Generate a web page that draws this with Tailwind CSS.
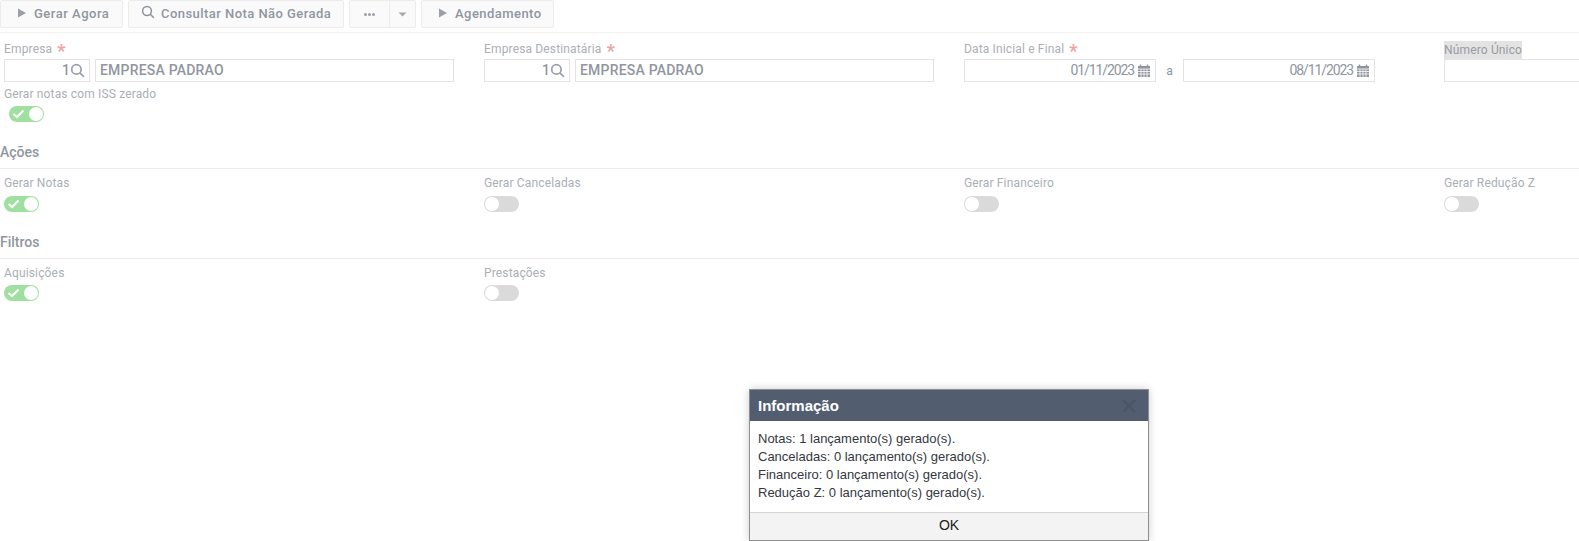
<!DOCTYPE html>
<html lang="pt-BR">
<head>
<meta charset="utf-8">
<script src="https://cdn.jsdelivr.net/npm/@tailwindcss/browser@4"></script>
</head>
<body class="bg-white">
<div class="relative w-[1579px] h-[541px] overflow-hidden bg-white font-['Roboto',sans-serif] text-[12px] tracking-[0.15px] text-[#aaafb6]">

  <!-- toolbar -->
  <div class="flex gap-[5px] h-[33px] border-b border-[#f2f2f2]">
    <button class="flex items-center w-[123px] h-[28px] pl-[15px] bg-[#fafafa] border border-[#ececec] rounded-[2px] text-[13px] font-medium text-[#8f96a0] tracking-[0.5px]">
      <svg class="w-[12px] h-[12px] mr-[6px] -mt-[3px]" viewBox="0 0 12 12"><path d="M2 1.5 L10 6 L2 10.5 Z" fill="#9aa0a9"/></svg>Gerar Agora
    </button>
    <button class="flex items-center w-[216px] h-[28px] pl-[12px] bg-[#fafafa] border border-[#ececec] rounded-[2px] text-[13px] font-medium text-[#8f96a0] tracking-[0.45px]">
      <svg class="w-[14px] h-[14px] mr-[6px] -mt-[4px]" viewBox="0 0 14 14" fill="none" stroke="#8c939d" stroke-width="1.5"><circle cx="6" cy="6" r="4.4"/><path d="M9 9 L12.8 12.8"/></svg>Consultar Nota Não Gerada
    </button>
    <div class="flex w-[67px] h-[28px] bg-[#fafafa] border border-[#ececec] rounded-[2px]">
      <div class="flex items-center justify-center w-[40px] border-r border-[#ececec] gap-[1px]">
        <span class="w-[3px] h-[3px] rounded-full bg-[#9aa0a9]"></span><span class="w-[3px] h-[3px] rounded-full bg-[#9aa0a9]"></span><span class="w-[3px] h-[3px] rounded-full bg-[#9aa0a9]"></span>
      </div>
      <div class="flex items-center justify-center flex-1">
        <svg class="w-[9px] h-[5px]" viewBox="0 0 9 5"><path d="M0.5 0.5 H8.5 L4.5 4.5 Z" fill="#a5aab1"/></svg>
      </div>
    </div>
    <button class="flex items-center w-[133px] h-[28px] pl-[15px] bg-[#fafafa] border border-[#ececec] rounded-[2px] text-[13px] font-medium text-[#8f96a0] tracking-[0.45px]">
      <svg class="w-[12px] h-[12px] mr-[6px] -mt-[3px]" viewBox="0 0 12 12"><path d="M2 1.5 L10 6 L2 10.5 Z" fill="#9aa0a9"/></svg>Agendamento
    </button>
  </div>

  <!-- main fields -->
  <div class="grid grid-cols-[480px_480px_480px_480px] pl-[4px] pt-[8px]">
    <div>
      <div class="h-[18px] leading-[16px]">Empresa <span class="ml-[2px] text-[#f0a3a3] text-[18px] font-bold leading-[16px] align-[-4px]">*</span></div>
      <div class="flex gap-[5px]">
        <div class="flex items-center justify-end w-[86px] h-[23px] pr-[4px] border border-[#e3e3e3] text-[14px] font-medium text-[#8f96a0]">1<svg class="w-[15px] h-[15px]" viewBox="0 0 14 14" fill="none" stroke="#9aa0a9" stroke-width="1.6"><circle cx="6" cy="6" r="4.4"/><path d="M9 9 L13 13"/></svg></div>
        <div class="flex items-center w-[359px] h-[23px] pl-[4px] border border-[#e3e3e3] text-[14px] font-medium tracking-[0.2px] text-[#8f96a0]">EMPRESA PADRAO</div>
      </div>
    </div>
    <div>
      <div class="h-[18px] leading-[16px]">Empresa Destinatária <span class="ml-[2px] text-[#f0a3a3] text-[18px] font-bold leading-[16px] align-[-4px]">*</span></div>
      <div class="flex gap-[5px]">
        <div class="flex items-center justify-end w-[86px] h-[23px] pr-[4px] border border-[#e3e3e3] text-[14px] font-medium text-[#8f96a0]">1<svg class="w-[15px] h-[15px]" viewBox="0 0 14 14" fill="none" stroke="#9aa0a9" stroke-width="1.6"><circle cx="6" cy="6" r="4.4"/><path d="M9 9 L13 13"/></svg></div>
        <div class="flex items-center w-[359px] h-[23px] pl-[4px] border border-[#e3e3e3] text-[14px] font-medium tracking-[0.2px] text-[#8f96a0]">EMPRESA PADRAO</div>
      </div>
    </div>
    <div>
      <div class="h-[18px] leading-[16px]">Data Inicial e Final <span class="ml-[2px] text-[#f0a3a3] text-[18px] font-bold leading-[16px] align-[-4px]">*</span></div>
      <div class="flex items-center">
        <div class="flex items-center justify-end w-[192px] h-[23px] pr-[4px] border border-[#e3e3e3] text-[14px] tracking-[-1.1px] text-[#8f96a0]">01/11/2023<svg class="w-[14px] h-[14px] ml-[3px]" viewBox="0 0 14 14"><path fill="#8f959e" d="M1 2h12v11H1z"/><path stroke="#8f959e" stroke-width="1.4" d="M3.5 .5v3M10.5 .5v3"/><path stroke="#fff" stroke-width=".8" d="M1 5h12M1 7.5h12M1 10h12M4 5v8M7 5v8M10 5v8"/></svg></div>
        <span class="w-[27px] text-center text-[#8f96a0]">a</span>
        <div class="flex items-center justify-end w-[192px] h-[23px] pr-[4px] border border-[#e3e3e3] text-[14px] tracking-[-1.1px] text-[#8f96a0]">08/11/2023<svg class="w-[14px] h-[14px] ml-[3px]" viewBox="0 0 14 14"><path fill="#8f959e" d="M1 2h12v11H1z"/><path stroke="#8f959e" stroke-width="1.4" d="M3.5 .5v3M10.5 .5v3"/><path stroke="#fff" stroke-width=".8" d="M1 5h12M1 7.5h12M1 10h12M4 5v8M7 5v8M10 5v8"/></svg></div>
      </div>
    </div>
    <div>
      <div class="h-[18px] leading-[18px]"><span class="inline-block h-[18px] bg-[#e3e3e3] text-[#979ca3]">Número Único</span></div>
      <div class="w-[200px] h-[23px] border border-[#e3e3e3]"></div>
    </div>
  </div>
  <div class="pl-[4px] mt-[4px] leading-[16px]">Gerar notas com ISS zerado</div>
  <div class="pl-[9px] mt-[4px]">
    <div class="flex items-center justify-between w-[35px] h-[16px] rounded-full bg-[#9fdf9f] pl-[3px] pr-[1px]">
      <svg class="w-[13px] h-[10px]" viewBox="0 0 13 10" fill="none" stroke="#fff" stroke-width="2.2"><path d="M1.5 5 L5 8 L11.5 1.5"/></svg>
      <span class="w-[14px] h-[14px] rounded-full bg-white"></span>
    </div>
  </div>

  <!-- Ações -->
  <div class="mt-[20px] h-[27px] leading-[20px] text-[14px] font-medium tracking-normal text-[#8f96a0] border-b border-[#ececec]">Ações</div>
  <div class="grid grid-cols-[480px_480px_480px_480px] pl-[4px] pt-[6px]">
    <div>
      <div class="h-[18px] leading-[16px] mb-[3px]">Gerar Notas</div>
      <div class="flex items-center justify-between w-[35px] h-[16px] rounded-full bg-[#9fdf9f] pl-[3px] pr-[1px]">
        <svg class="w-[13px] h-[10px]" viewBox="0 0 13 10" fill="none" stroke="#fff" stroke-width="2.2"><path d="M1.5 5 L5 8 L11.5 1.5"/></svg>
        <span class="w-[14px] h-[14px] rounded-full bg-white"></span>
      </div>
    </div>
    <div>
      <div class="h-[18px] leading-[16px] mb-[3px]">Gerar Canceladas</div>
      <div class="flex items-center w-[35px] h-[16px] rounded-full bg-[#dadada] pl-[1px]"><span class="w-[14px] h-[14px] rounded-full bg-white"></span></div>
    </div>
    <div>
      <div class="h-[18px] leading-[16px] mb-[3px]">Gerar Financeiro</div>
      <div class="flex items-center w-[35px] h-[16px] rounded-full bg-[#dadada] pl-[1px]"><span class="w-[14px] h-[14px] rounded-full bg-white"></span></div>
    </div>
    <div>
      <div class="h-[18px] leading-[16px] mb-[3px]">Gerar Redução Z</div>
      <div class="flex items-center w-[35px] h-[16px] rounded-full bg-[#dadada] pl-[1px]"><span class="w-[14px] h-[14px] rounded-full bg-white"></span></div>
    </div>
  </div>

  <!-- Filtros -->
  <div class="mt-[20px] h-[27px] leading-[20px] text-[14px] font-medium tracking-normal text-[#8f96a0] border-b border-[#ececec]">Filtros</div>
  <div class="grid grid-cols-[480px_480px_480px_480px] pl-[4px] pt-[6px]">
    <div>
      <div class="h-[18px] leading-[16px] mb-[2px]">Aquisições</div>
      <div class="flex items-center justify-between w-[35px] h-[16px] rounded-full bg-[#9fdf9f] pl-[3px] pr-[1px]">
        <svg class="w-[13px] h-[10px]" viewBox="0 0 13 10" fill="none" stroke="#fff" stroke-width="2.2"><path d="M1.5 5 L5 8 L11.5 1.5"/></svg>
        <span class="w-[14px] h-[14px] rounded-full bg-white"></span>
      </div>
    </div>
    <div>
      <div class="h-[18px] leading-[16px] mb-[2px]">Prestações</div>
      <div class="flex items-center w-[35px] h-[16px] rounded-full bg-[#dadada] pl-[1px]"><span class="w-[14px] h-[14px] rounded-full bg-white"></span></div>
    </div>
  </div>

  <!-- modal -->
  <div class="absolute left-[749px] top-[389px] w-[400px] h-[152px] flex flex-col bg-white border border-[#8f8f8f] shadow-[0_0_8px_rgba(0,0,0,0.2)] font-['Liberation_Sans',sans-serif] tracking-normal">
    <div class="flex items-center justify-between h-[31px] pl-[8px] pr-[12px] pt-[1px] bg-[#525e70] text-white text-[15px] font-bold">Informação
      <svg class="w-[14px] h-[14px]" viewBox="0 0 14 14" fill="none" stroke="#4a5566" stroke-width="2"><path d="M1 1 L13 13 M13 1 L1 13"/></svg>
    </div>
    <div class="flex-1 pt-[9px] pl-[8px] text-[13px] leading-[18px] text-[#33383e]">
      <p>Notas: 1 lançamento(s) gerado(s).</p>
      <p>Canceladas: 0 lançamento(s) gerado(s).</p>
      <p>Financeiro: 0 lançamento(s) gerado(s).</p>
      <p>Redução Z: 0 lançamento(s) gerado(s).</p>
    </div>
    <button class="h-[28px] bg-[#f3f3f3] border-t border-[#d4d4d4] text-[14px] text-[#222] pb-[2px]">OK</button>
  </div>
</div>
</body>
</html>
